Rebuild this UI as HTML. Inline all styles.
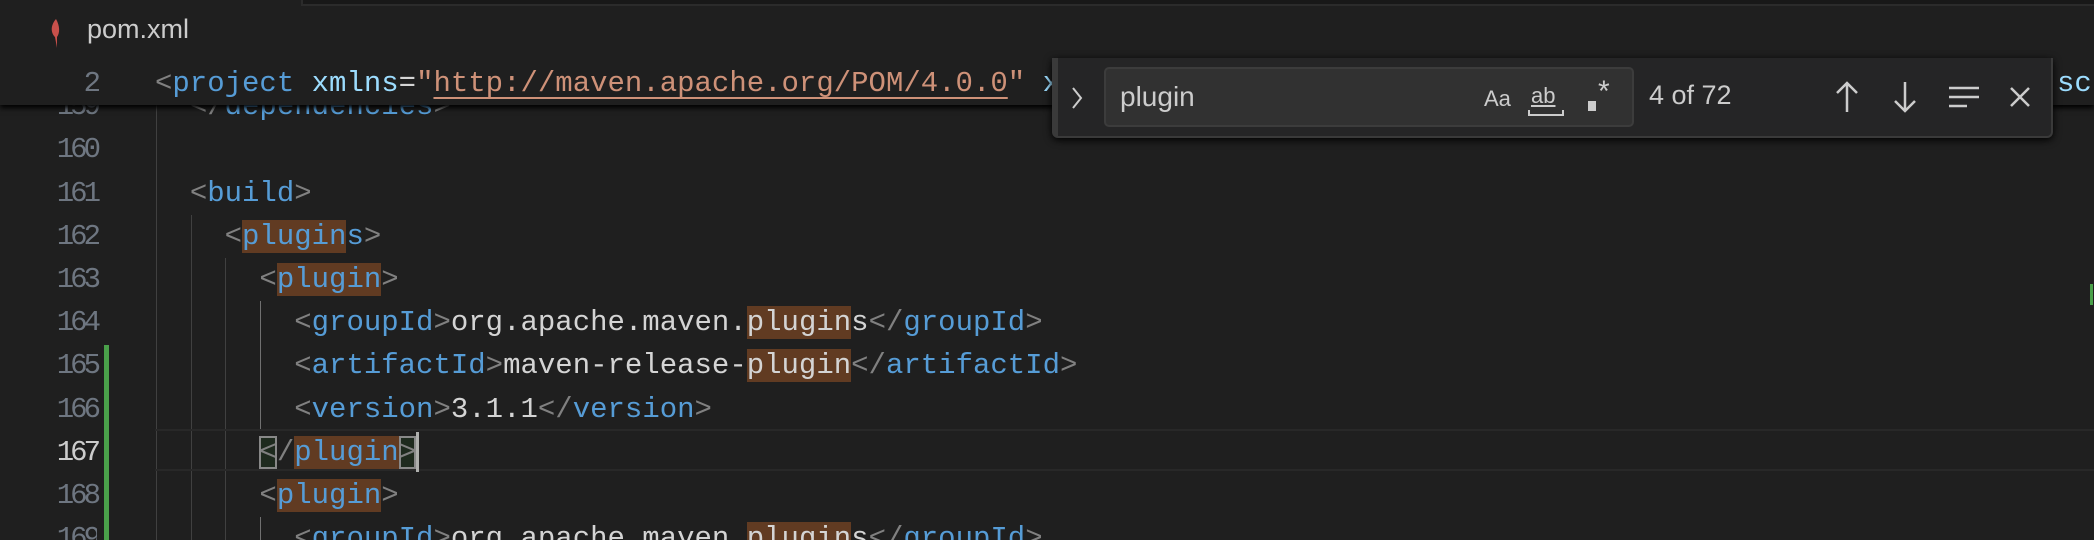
<!DOCTYPE html>
<html style="width:2094px;height:540px;overflow:hidden"><head><meta charset="utf-8"><style>
*{margin:0;padding:0;box-sizing:border-box}
body{width:2094px;height:540px;background:#1f1f1f;overflow:hidden;position:relative;font-family:"Liberation Mono",monospace}
.ln{position:absolute;left:0;width:97px;text-align:right;font-size:29px;letter-spacing:-4px;color:#6e7681;height:43.2px;line-height:43.2px}
.code{position:absolute;left:155px;font-size:29px;height:43.2px;line-height:43.2px;white-space:pre;color:#d4d4d4;overflow:hidden;width:1900px}
.b{color:#808080}.t{color:#569cd6}.a{color:#9cdcfe}.s{color:#ce9178}
.m{background:#613b22}
.g{position:absolute;width:1px;background:#404040}
.bm{outline:2px solid #888;outline-offset:-2px;background:#1e2a1e}
</style></head><body>
<div class="g" style="left:156px;top:105px;height:435px"></div>
<div class="g" style="left:191px;top:215px;height:325px"></div>
<div class="g" style="left:225px;top:258px;height:282px"></div>
<div class="g" style="left:260px;top:301px;height:130px;background:#707070"></div>
<div class="g" style="left:260px;top:517px;height:23px;background:#707070"></div>
<div style="position:absolute;left:155px;width:1939px;top:429px;height:42px;border-top:2px solid #282828;border-bottom:2px solid #282828"></div>
<div style="position:absolute;left:104px;top:345px;width:5px;height:195px;background:#4aa04a"></div>
<div style="position:absolute;left:2090px;top:284px;width:3px;height:21px;background:#4aa04a"></div>

<div class="ln" style="top:85.2px">159</div><div class="code" style="top:85.2px">  <span class="b">&lt;/</span><span class="t">dependencies</span><span class="b">&gt;</span></div>
<div class="ln" style="top:128.4px">160</div>
<div class="ln" style="top:171.6px">161</div><div class="code" style="top:171.6px">  <span class="b">&lt;</span><span class="t">build</span><span class="b">&gt;</span></div>
<div class="ln" style="top:214.8px">162</div><div class="code" style="top:214.8px">    <span class="b">&lt;</span><span class="t m">plugin</span><span class="t">s</span><span class="b">&gt;</span></div>
<div class="ln" style="top:258px">163</div><div class="code" style="top:258px">      <span class="b">&lt;</span><span class="t m">plugin</span><span class="b">&gt;</span></div>
<div class="ln" style="top:301.2px">164</div><div class="code" style="top:301.2px">        <span class="b">&lt;</span><span class="t">groupId</span><span class="b">&gt;</span>org.apache.maven.<span class="m">plugin</span>s<span class="b">&lt;/</span><span class="t">groupId</span><span class="b">&gt;</span></div>
<div class="ln" style="top:344.4px">165</div><div class="code" style="top:344.4px">        <span class="b">&lt;</span><span class="t">artifactId</span><span class="b">&gt;</span>maven-release-<span class="m">plugin</span><span class="b">&lt;/</span><span class="t">artifactId</span><span class="b">&gt;</span></div>
<div class="ln" style="top:387.6px">166</div><div class="code" style="top:387.6px">        <span class="b">&lt;</span><span class="t">version</span><span class="b">&gt;</span>3.1.1<span class="b">&lt;/</span><span class="t">version</span><span class="b">&gt;</span></div>
<div class="ln" style="top:430.8px;color:#cccccc">167</div><div class="code" style="top:430.8px">      <span class="b bm">&lt;</span><span class="b">/</span><span class="t m">plugin</span><span class="b bm">&gt;</span><span style="display:inline-block;width:3px;height:40px;background:#aeafad;vertical-align:middle"></span></div>
<div class="ln" style="top:474px">168</div><div class="code" style="top:474px">      <span class="b">&lt;</span><span class="t m">plugin</span><span class="b">&gt;</span></div>
<div class="ln" style="top:517.2px;height:22.8px;overflow:hidden">169</div><div class="code" style="top:517.2px;height:22.8px">        <span class="b">&lt;</span><span class="t">groupId</span><span class="b">&gt;</span>org.apache.maven.<span class="m">plugin</span>s<span class="b">&lt;/</span><span class="t">groupId</span><span class="b">&gt;</span></div>

<div style="position:absolute;left:0;top:0;width:2094px;height:105px;background:#1f1f1f;box-shadow:0 3px 5px #000"></div>
<div style="position:absolute;left:301px;top:-2px;width:1793px;height:8px;background:#181818;border:2px solid #2b2b2b;border-right:none"></div>
<svg style="position:absolute;left:48px;top:18px" width="16" height="32" viewBox="0 0 16 32"><path d="M8 1 C2 8 3 15 7 19 L9 30 L9 19 C12 15 12 8 8 1Z" fill="#c8504b"/></svg>
<div style="position:absolute;left:87px;top:14px;font-family:'Liberation Sans',sans-serif;font-size:27px;color:#cccccc">pom.xml</div>
<div class="ln" style="top:62px">2</div>
<div class="code" style="top:62px;width:1000px"><span class="b">&lt;</span><span class="t">project</span> <span class="a">xmlns</span>=<span class="s">"<span style="text-decoration:underline;text-underline-offset:6px">http://maven.apache.org/POM/4.0.0</span>"</span> <span class="a">xmlns:xsi</span></div>
<div style="position:absolute;left:2057px;top:62px;height:43px;line-height:43px;font-size:29px;color:#9cdcfe;overflow:hidden;width:37px;white-space:pre">sch</div>

<div style="position:absolute;left:1052px;top:58px;width:1001px;height:80px;background:#252526;border:2px solid #3a3a3a;border-top:none;border-radius:0 0 6px 6px;box-shadow:0 2px 8px #000;font-family:'Liberation Sans',sans-serif;color:#cccccc">
 <div style="position:absolute;left:0;top:0;width:4px;height:78px;background:#3a3a3a"></div>
 <svg style="position:absolute;left:16px;top:28px" width="14" height="24"><path d="M3 2 L11 12 L3 22" stroke="#ccc" stroke-width="2" fill="none"/></svg>
 <div style="position:absolute;left:50px;top:9px;width:530px;height:60px;background:#313131;border:2px solid #3c3c3c;border-radius:5px">
  <div style="position:absolute;left:14px;top:12px;font-size:28px">plugin</div>
  <div style="position:absolute;left:378px;top:17px;font-size:22px">Aa</div>
  <div style="position:absolute;left:425px;top:14px;font-size:22px;text-decoration:underline">ab</div>
  <div style="position:absolute;left:422px;top:41px;width:36px;height:6px;border:2px solid #ccc;border-top:none"></div>
  <div style="position:absolute;left:482px;top:32px;width:8px;height:10px;background:#ccc"></div>
  <div style="position:absolute;left:492px;top:6px;font-size:30px">*</div>
 </div>
 <div style="position:absolute;left:595px;top:22px;font-size:27px">4 of 72</div>
 <svg style="position:absolute;left:778px;top:22px" width="30" height="34"><path d="M15 32 V3 M5 13 L15 3 L25 13" stroke="#ccc" stroke-width="2.5" fill="none"/></svg>
 <svg style="position:absolute;left:836px;top:22px" width="30" height="34"><path d="M15 2 V31 M5 21 L15 31 L25 21" stroke="#ccc" stroke-width="2.5" fill="none"/></svg>
 <svg style="position:absolute;left:893px;top:26px" width="34" height="26"><path d="M2 4 H32 M2 13 H32 M2 22 H20" stroke="#ccc" stroke-width="2.5" fill="none"/></svg>
 <svg style="position:absolute;left:954px;top:27px" width="24" height="24"><path d="M3 3 L21 21 M21 3 L3 21" stroke="#ccc" stroke-width="2.5" fill="none"/></svg>
</div>
</body></html>
